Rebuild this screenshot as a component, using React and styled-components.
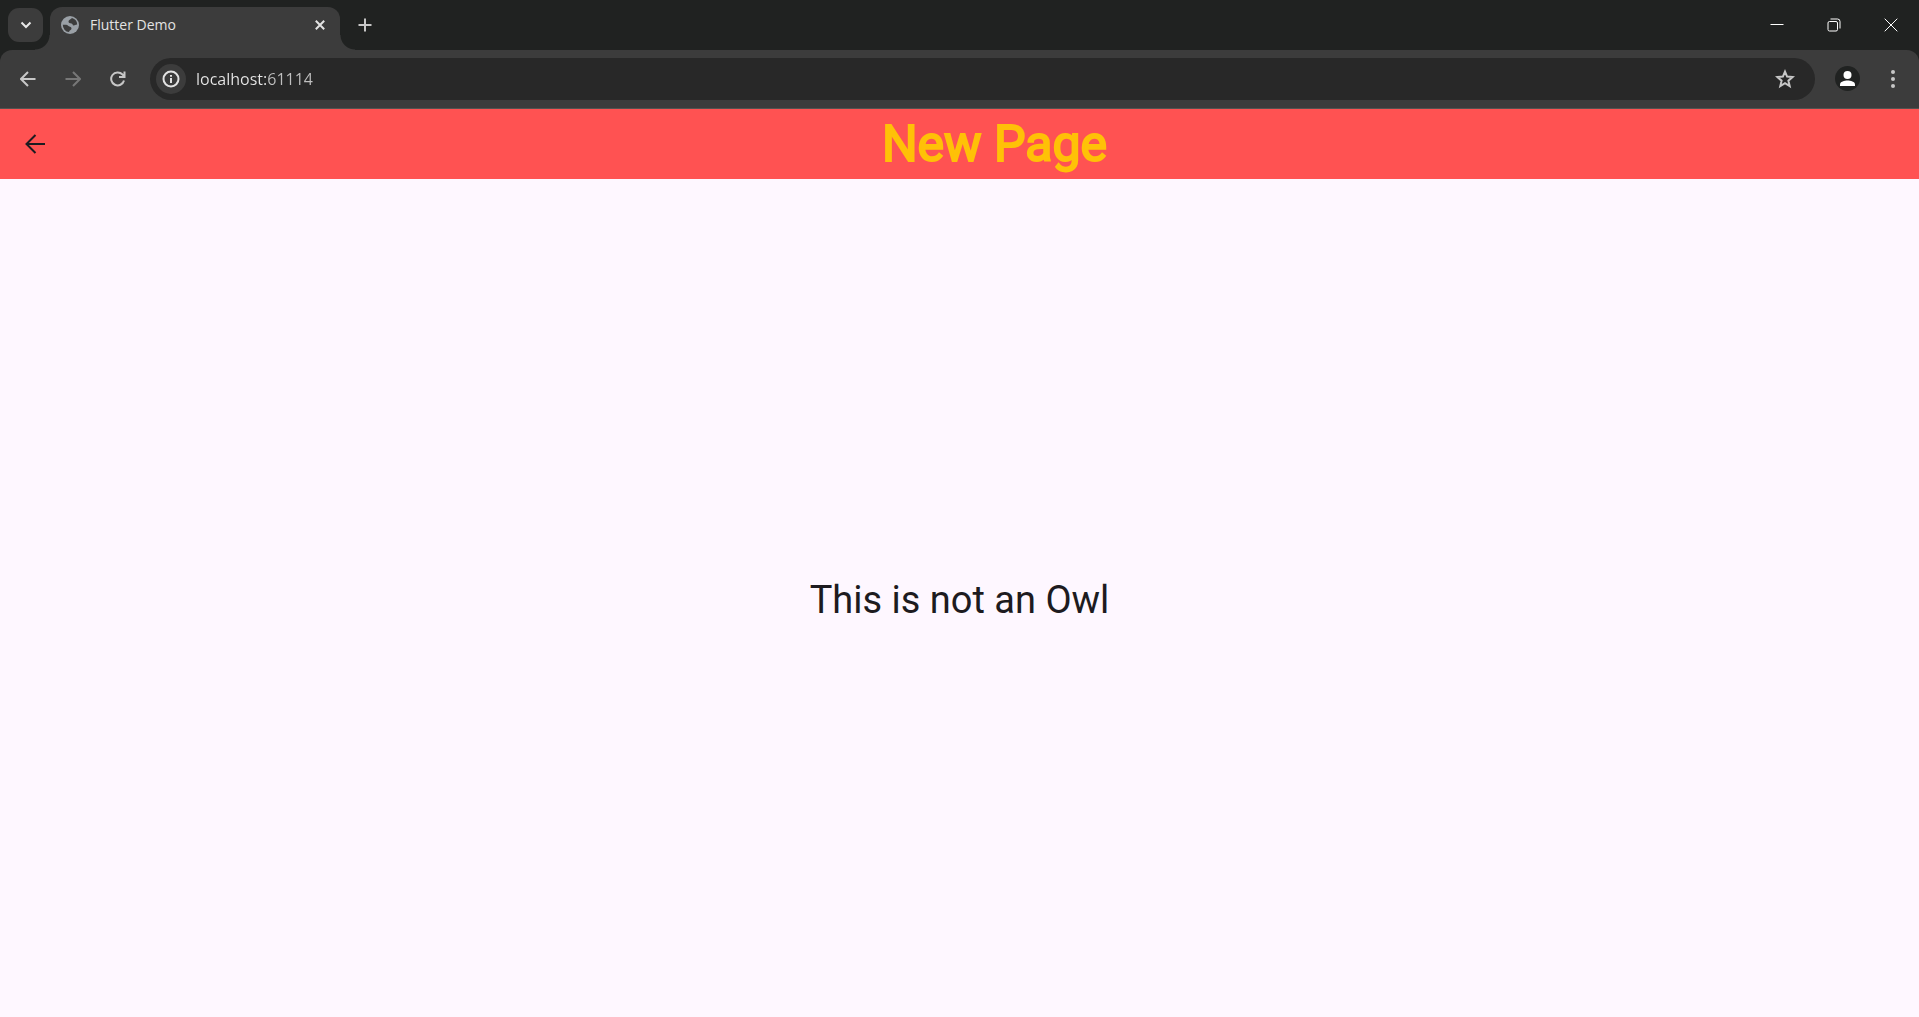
import React from "react";
import styled, { createGlobalStyle, css } from "styled-components";

const GlobalStyle = createGlobalStyle`
  * { box-sizing: border-box; }
  html, body, #root { height: 100%; }
  body {
    margin: 0;
    background: #fef7ff;
    font-family: Roboto, "Liberation Sans", sans-serif;
  }
  button { font: inherit; }
`;

const Window = styled.div`
  display: flex;
  flex-direction: column;
  min-height: 100%;
`;

const TabStrip = styled.div`
  display: flex;
  align-items: center;
  height: 50px;
  padding-left: 8px;
  background: #202221;
`;

const IconButton = styled.button`
  display: flex;
  align-items: center;
  justify-content: center;
  flex: none;
  width: ${(p) => p.$w || 35}px;
  height: ${(p) => p.$h || 35}px;
  padding: 0;
  border: 0;
  border-radius: ${(p) => p.$radius || "50%"};
  background: ${(p) => p.$bg || "transparent"};
  color: ${(p) => p.$color || "#c7c7c7"};
`;

const flare = css`
  content: "";
  position: absolute;
  bottom: 0;
  width: 15px;
  height: 15px;
`;

const Tab = styled.div`
  position: relative;
  display: flex;
  align-items: center;
  align-self: flex-end;
  width: 290px;
  height: 43px;
  margin-left: 7px;
  padding: 0 8px 7px 11px;
  border-radius: 12px 12px 0 0;
  background: #3c3c3c;
  &::before {
    ${flare}
    right: 100%;
    background: radial-gradient(circle at 0 0, transparent 14px, #3c3c3c 15px);
  }
  &::after {
    ${flare}
    left: 100%;
    background: radial-gradient(circle at 100% 0, transparent 14px, #3c3c3c 15px);
  }
`;

const TabTitle = styled.span`
  flex: 1;
  margin-left: 11px;
  color: #e3e3e3;
  font: 14px/20px "Open Sans", "Noto Sans", sans-serif;
`;

const WindowControls = styled.div`
  display: flex;
  margin-left: auto;
`;

const ToolbarBack = styled.div`
  background: #202221;
`;

const Toolbar = styled.div`
  display: flex;
  align-items: center;
  height: 59px;
  padding: 0 9px 1px 10px;
  border-bottom: 1px solid #555250;
  border-radius: 12px 12px 0 0;
  background: #3c3c3c;
`;

const NavButtons = styled.div`
  display: flex;
  gap: 10px;
`;

const AddressBar = styled.form`
  display: flex;
  align-items: center;
  flex: 1;
  height: 42px;
  margin: 0 15px;
  padding: 0 13px 0 6px;
  border-radius: 21px;
  background: #282828;
`;

const AddressInput = styled.input`
  flex: 1;
  min-width: 0;
  height: 28px;
  margin-left: 10px;
  padding: 0;
  border: 0;
  outline: 0;
  background: linear-gradient(90deg, #e8e8e8 70px, #c0c0c0 70px);
  background-clip: text;
  -webkit-text-fill-color: transparent;
  font: 16px/28px "Open Sans", "Noto Sans", sans-serif;
`;

const AppBar = styled.header`
  display: flex;
  align-items: center;
  height: 70px;
  background: #ff5252;
`;

const AppTitle = styled.h1`
  flex: 1;
  margin: 0;
  color: #ffc107;
  font-size: 50px;
  font-weight: 400;
  line-height: 70px;
  text-align: center;
  -webkit-text-stroke: 2px #ffc107;
`;

const Page = styled.main`
  display: flex;
  flex: 1;
  align-items: center;
  justify-content: center;
  padding-top: 4px;
  background: #fef7ff;
`;

const Message = styled.p`
  margin: 0;
  color: #1d1b20;
  font-size: 38px;
  line-height: 54px;
`;

const Icon = ({ size = 20, box = 24, children, ...rest }) => (
  <svg width={size} height={size} viewBox={`0 0 ${box} ${box}`} fill="none" stroke="currentColor" aria-hidden="true" {...rest}>
    {children}
  </svg>
);

const ArrowIcon = ({ flip }) => (
  <Icon size={16} box={16} strokeWidth="2">
    <path d={flip ? "M0.5 8H14.5M8 1l7 7-7 7" : "M15.5 8H1.5M8 1L1 8l7 7"} />
  </Icon>
);

export default function App() {
  return (
    <>
      <GlobalStyle />
      <Window>
        <TabStrip>
          <IconButton $h={34} $radius="11px" $bg="#3c3c3c" $color="#e8e8e8" aria-label="Search tabs">
            <Icon size={12} box={12} strokeWidth="2"><path d="M1.500 3.500L6 8l4.500-4.500" /></Icon>
          </IconButton>
          <Tab>
            <Icon size={18} box={18} stroke="none" color="#9aa0a6">
              <circle cx="9" cy="9" r="9" fill="currentColor" />
              <path fill="#3c3c3c" d="M11 2C9.500 3.600 7.500 4 7.500 5.600s1.500 1.600 3 1.800.8 2 2.200 2 1.500-1 3.500-1A7.200 7.200 0 0 0 11 2zM1.800 8.800H5c2 0 2.200 1.800 4 2s2 2.500.6 3.200-1.200 1-1.600 2.100A7.200 7.200 0 0 1 1.800 8.800z" />
            </Icon>
            <TabTitle>Flutter Demo</TabTitle>
            <IconButton $w={24} $h={24} $color="#e3e3e3" aria-label="Close tab">
              <Icon size={10} box={10} strokeWidth="2"><path d="M.8.8l8.400 8.400M9.200.8L.8 9.200" /></Icon>
            </IconButton>
          </Tab>
          <IconButton $w={50} aria-label="New tab">
            <Icon size={14} box={14} strokeWidth="2"><path d="M7 .5v13M.5 7h13" /></Icon>
          </IconButton>
          <WindowControls>
            <IconButton $w={57} $h={50} $radius="0" $color="#fff" aria-label="Minimize">
              <Icon size={14} box={14}><path d="M.5 6.500h13" /></Icon>
            </IconButton>
            <IconButton $w={57} $h={50} $radius="0" $color="#fff" aria-label="Restore">
              <Icon size={14} box={14}>
                <rect x="1" y="3.500" width="9.500" height="9.500" rx="1.500" />
                <path d="M3.500 1h7A2.500 2.500 0 0 1 13 3.500v7" />
              </Icon>
            </IconButton>
            <IconButton $w={57} $h={50} $radius="0" $color="#fff" aria-label="Close window">
              <Icon size={14} box={14}><path d="M.7.7l12.600 12.600M13.300.7L.7 13.300" /></Icon>
            </IconButton>
          </WindowControls>
        </TabStrip>

        <ToolbarBack>
          <Toolbar>
            <NavButtons>
              <IconButton aria-label="Back"><ArrowIcon /></IconButton>
              <IconButton $color="#777" aria-label="Forward"><ArrowIcon flip /></IconButton>
              <IconButton aria-label="Reload">
                <Icon size={16} box={16} strokeWidth="2">
                  <path d="M14 9.500A6.500 6.500 0 1 1 12.500 3.500L14 5.500M14.500 .5v5.500H9" />
                </Icon>
              </IconButton>
            </NavButtons>
            <AddressBar onSubmit={(e) => e.preventDefault()}>
              <IconButton type="button" $w={30} $h={30} $bg="#3c3c3c" $color="#e3e3e3" aria-label="View site information">
                <Icon size={18} box={18} strokeWidth="2">
                  <circle cx="9" cy="9" r="7.500" />
                  <path d="M9 8v5M9 5v1.800" />
                </Icon>
              </IconButton>
              <AddressInput aria-label="Address" defaultValue="localhost:61114" spellCheck={false} />
              <IconButton type="button" aria-label="Bookmark this page">
                <Icon size={20} box={20} strokeWidth="2">
                  <path d="M10 2.600l2.100 5 5.500.5-4.200 3.600 1.300 5.400L10 14.200l-4.700 2.900 1.300-5.400L2.400 8.100l5.500-.5z" />
                </Icon>
              </IconButton>
            </AddressBar>
            <NavButtons>
              <IconButton aria-label="Profile">
                <Icon size={25} box={25} stroke="none">
                  <circle cx="12.500" cy="12.500" r="12.500" fill="#202221" />
                  <circle cx="12.500" cy="9" r="4" fill="#fff" />
                  <path d="M5 20v-1.500c0-3 4.500-4 7.500-4s7.500 1 7.500 4V20z" fill="#fff" />
                </Icon>
              </IconButton>
              <IconButton aria-label="Browser menu">
                <Icon size={18} box={18} fill="currentColor" stroke="none">
                  <circle cx="9" cy="2" r="2" /><circle cx="9" cy="9" r="2" /><circle cx="9" cy="16" r="2" />
                </Icon>
              </IconButton>
            </NavButtons>
          </Toolbar>
        </ToolbarBack>

        <AppBar>
          <IconButton $w={70} $h={70} $radius="0" $color="#1d1b20" aria-label="Go back">
            <Icon size={20} box={20} strokeWidth="2"><path d="M20 10H2M10.500 1L1.500 10l9 9" /></Icon>
          </IconButton>
          <AppTitle>New Page</AppTitle>
        </AppBar>
        <Page>
          <Message>This is not an Owl</Message>
        </Page>
      </Window>
    </>
  );
}
